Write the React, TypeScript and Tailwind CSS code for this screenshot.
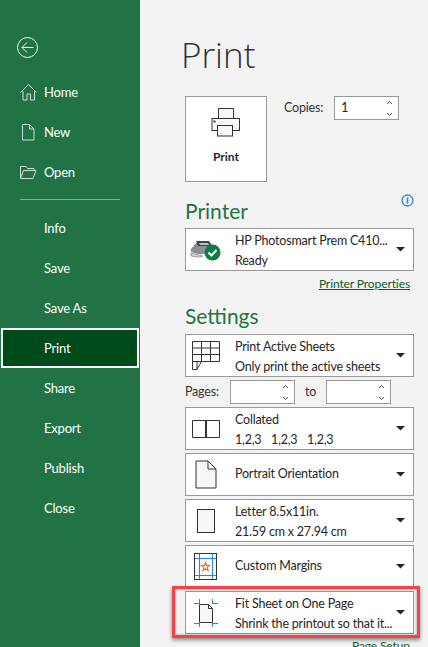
import React from "react";

function Caret() {
  return (
    <svg width="10" height="5" viewBox="0 0 10 5" className="shrink-0">
      <path d="M0 0H9L4.5 4.5Z" fill="#262626" />
    </svg>
  );
}

function Spin() {
  return (
    <svg width="7" height="17" viewBox="0 0 7 17" className="shrink-0">
      <path d="M1 4L3.5 1.5L6 4M1 13L3.5 15.5L6 13" fill="none" stroke="#555" strokeWidth="1" />
    </svg>
  );
}

function Drop({ icon, a, b, h = "h-[43px]" }: { icon: React.ReactNode; a: string; b?: React.ReactNode; h?: string }) {
  return (
    <div className={`${h} w-[229px] border border-[#999] bg-white flex items-center shrink-0`}>
      <div className="w-[39px] mr-[10px] shrink-0 flex justify-center items-center">{icon}</div>
      <div className={`flex-1 min-w-0 text-[12.5px] tracking-[-0.2px] leading-[20px] text-[#262626] whitespace-nowrap ${b ? "pt-[2px]" : "pb-[1px]"}`}>
        <div>{a}</div>
        {b && <div>{b}</div>}
      </div>
      <div className="w-[17px] pr-[7px] shrink-0 flex justify-end"><Caret /></div>
    </div>
  );
}

function NavItem({ label, icon, active }: { label: string; icon?: React.ReactNode; active?: boolean }) {
  return (
    <div className={`h-[40px] flex items-center text-[13px] tracking-[-0.2px] text-white ${active ? "bg-[#004b1c] border-2 border-white mx-[1px] pl-[41px]" : "pl-[20px]"}`}>
      {!active && <div className="w-[24px] shrink-0 flex">{icon}</div>}
      <span className="mt-[2px]">{label}</span>
    </div>
  );
}

const stroke = "#d4dcd7";

export default function App() {
  return (
    <div className="w-[428px] h-[647px] overflow-hidden flex bg-[#f3f3f3] relative" style={{ fontFamily: '"Lato", "Noto Sans", sans-serif' }}>
      <aside className="w-[140px] shrink-0 bg-[#217346] pt-[37px]">
        <svg width="22" height="22" viewBox="0 0 22 22" className="ml-[17px] mb-[13px]">
          <circle cx="10.5" cy="10.5" r="10" fill="none" stroke="#eef3f0" strokeWidth="1" />
          <path d="M16.5 10.5H5M10 5.5L5 10.5L10 15.5" fill="none" stroke="#eef3f0" strokeWidth="1" />
        </svg>
        <NavItem label="Home" icon={
          <svg width="17" height="17" viewBox="0 0 17 17"><path d="M.5 8.5L8.5.5L16.5 8.5M3 6.5V16H7V10H10.5V16H14.5V6.5" fill="none" stroke={stroke} /></svg>
        } />
        <NavItem label="New" icon={
          <svg width="17" height="17" viewBox="0 0 17 17"><path d="M2.5 .5H9.5L14 5V16H2.5ZM9.5 .5V5H14" fill="none" stroke={stroke} /></svg>
        } />
        <NavItem label="Open" icon={
          <svg width="17" height="13" viewBox="0 0 17 13"><path d="M.5 12V.5H6L7.5 2.5H14V4.5M.5 12.5H13L16 4.5H3.5L.5 12.5Z" fill="none" stroke={stroke} /></svg>
        } />
        <div className="h-px bg-[#7fb196] mx-[20px] w-[100px] mt-[7px] mb-[8px]" />
        <NavItem label="Info" />
        <NavItem label="Save" />
        <NavItem label="Save As" />
        <NavItem label="Print" active />
        <NavItem label="Share" />
        <NavItem label="Export" />
        <NavItem label="Publish" />
        <NavItem label="Close" />
      </aside>

      <main className="flex-1 min-w-0 pl-[45px] flex flex-col">
        <h1 className="text-[35px] leading-[50px] font-light text-[#333] mt-[30px] -ml-[4px]" style={{ fontFamily: '"Open Sans", sans-serif' }}>Print</h1>
        <div className="flex mt-[16px]">
          <div className="w-[82px] h-[86px] border border-[#999] bg-white flex flex-col items-center shrink-0">
            <svg width="30" height="30" viewBox="0 0 30 30" className="mt-[11px]">
              <path d="M7.5 10.5V.5H22.5V10.5" fill="#f7f7f7" stroke="#333" />
              <rect x=".5" y="10.5" width="27.5" height="12" fill="#f7f7f7" stroke="#333" transform="translate(.5 0)" />
              <rect x="6.5" y="17.5" width="15" height="10.5" fill="#f7f7f7" stroke="#333" />
              <rect x="2.5" y="12.5" width="2" height="2" fill="#333" />
            </svg>
            <span className="text-[12px] font-bold text-[#262626] mt-[10px]">Print</span>
          </div>
          <span className="text-[12.5px] tracking-[-0.2px] text-[#333] ml-[17px] mt-[3px] w-[50px]">Copies:</span>
          <div className="w-[65px] h-[24px] border border-[#999] bg-white flex items-center justify-between pl-[6px] pr-[5px] text-[13px] text-[#262626]">
            <span>1</span><Spin />
          </div>
        </div>

        <div className="flex justify-between items-start mt-[14px] w-[229px] relative">
          <h2 className="text-[21px] leading-[30px] text-[#217346]">Printer</h2>
          <svg width="13" height="13" viewBox="0 0 13 13" className="absolute right-0 -top-[2px]">
            <circle cx="6.5" cy="6.5" r="5.5" fill="none" stroke="#2b88d8" strokeWidth="1.3" />
            <path d="M6.5 3.5V9.5" stroke="#2b88d8" strokeWidth="1.6" />
          </svg>
        </div>
        <div className="mt-[2px]">
          <Drop a="HP Photosmart Prem C410..." b="Ready" icon={
            <svg width="31" height="23" viewBox="0 0 31 23">
              <path d="M1 11L6 5H20L26 10V16H8L1 14Z" fill="#8a8f93" />
              <path d="M6 3H19L22 8H8Z" fill="#3f4448" />
              <path d="M9 5H18L19 7H10Z" fill="#a9c4d8" />
              <path d="M1 15L9 17H12V19H8L1 18Z" fill="#d5d7d9" stroke="#555" strokeWidth=".5" />
              <circle cx="22.5" cy="14.5" r="8" fill="#107c41" />
              <path d="M18.5 14.5L21.5 17.5L26.5 12" fill="none" stroke="#fff" strokeWidth="2" />
            </svg>
          } />
        </div>
        <div className="w-[225px] text-right text-[12px] tracking-[-0.1px] leading-[18px] mt-[4px] text-[#0a5c2f] underline whitespace-nowrap">Printer Properties</div>
        <h2 className="text-[21px] leading-[30px] text-[#217346] mt-[8px]">Settings</h2>
        <div className="mt-[3px] flex flex-col gap-[3px]">
          <Drop a="Print Active Sheets" b="Only print the active sheets" icon={
            <svg width="28" height="29" viewBox="0 0 28 29">
              <path d="M.5 .5H27.5V20.5H9.5L5 28.5H.5ZM.5 7H27.5M.5 13.5H27.5M.5 20.5H9.5M9.5 .5V20.5M18.5 .5V20.5M5 20.5V28.5" fill="none" stroke="#333" />
            </svg>
          } />
          <div className="flex items-center h-[24px] text-[12.5px] tracking-[-0.2px] text-[#333]">
            <span className="w-[45px]">Pages:</span>
            <div className="w-[65px] h-[24px] border border-[#999] bg-white flex items-center justify-end pr-[5px]"><Spin /></div>
            <span className="w-[31px] text-center">to</span>
            <div className="w-[65px] h-[24px] border border-[#999] bg-white flex items-center justify-end pr-[5px]"><Spin /></div>
          </div>
          <Drop a="Collated" b={<span className="flex gap-[8px]"><span className="w-[28px]">1,2,3</span><span className="w-[28px]">1,2,3</span><span>1,2,3</span></span>} icon={
            <svg width="28" height="18" viewBox="0 0 28 18">
              <path d="M.5 .5H27.5V17.5H.5Z" fill="none" stroke="#333" strokeWidth="1" />
              <path d="M14 .5V17.5" fill="none" stroke="#333" strokeWidth="2" />
            </svg>
          } />
          <Drop a="Portrait Orientation" icon={
            <svg width="22" height="29" viewBox="0 0 22 29">
              <path d="M1 1H13L21 9V28H1ZM13 1V9H21" fill="#f7f7f7" stroke="#333" />
            </svg>
          } />
          <Drop a="Letter 8.5x11in." b="21.59 cm x 27.94 cm" icon={
            <svg width="18" height="24" viewBox="0 0 18 24"><rect x=".5" y=".5" width="17" height="23" fill="#f7f7f7" stroke="#333" /></svg>
          } />
          <Drop a="Custom Margins" h="h-[42px]" icon={
            <svg width="23" height="27" viewBox="0 0 23 27">
              <rect x=".5" y=".5" width="22" height="26" fill="#f7fbfe" stroke="#333" />
              <path d="M5.5 1V26M18.5 1V26M1 5.5H22M1 22.5H22" stroke="#2b88d8" />
              <path d="M11.5 9.5L12.6 12.5H15.5L13.2 14.4L14 17.5L11.5 15.7L9 17.5L9.8 14.4L7.5 12.5H10.4Z" fill="none" stroke="#e8781e" strokeWidth="1.2" />
            </svg>
          } />
        </div>
        <div className="mt-[4px]">
          <Drop a="Fit Sheet on One Page" b="Shrink the printout so that it..." icon={
            <svg width="24" height="28" viewBox="0 0 24 28">
              <path d="M5.5 5.5H14.5L18.5 9.5V23.5H5.5Z" fill="#f7f7f7" stroke="#333" />
              <path d="M14.5 5.5V9.5H18.5" fill="none" stroke="#333" />
              <path d="M0 4.5H6M5.5 0V4.5M18 4.5H24M18.5 0V4.5M0 24.5H6M5.5 24.5V28M18 24.5H24M18.5 24.5V28" fill="none" stroke="#2b88d8" />
            </svg>
          } />
        </div>
        <div className="w-[225px] text-right text-[12px] tracking-[-0.1px] leading-[18px] mt-[3px] text-[#0a5c2f] underline whitespace-nowrap">Page Setup</div>
      </main>

      <div className="absolute left-[172px] top-[586px] w-[248px] h-[52px] border-[3px] border-[#f0444a] shadow-[0_2px_4px_rgba(0,0,0,0.45),inset_0_0_3px_rgba(0,0,0,0.4)]" />
    </div>
  );
}
